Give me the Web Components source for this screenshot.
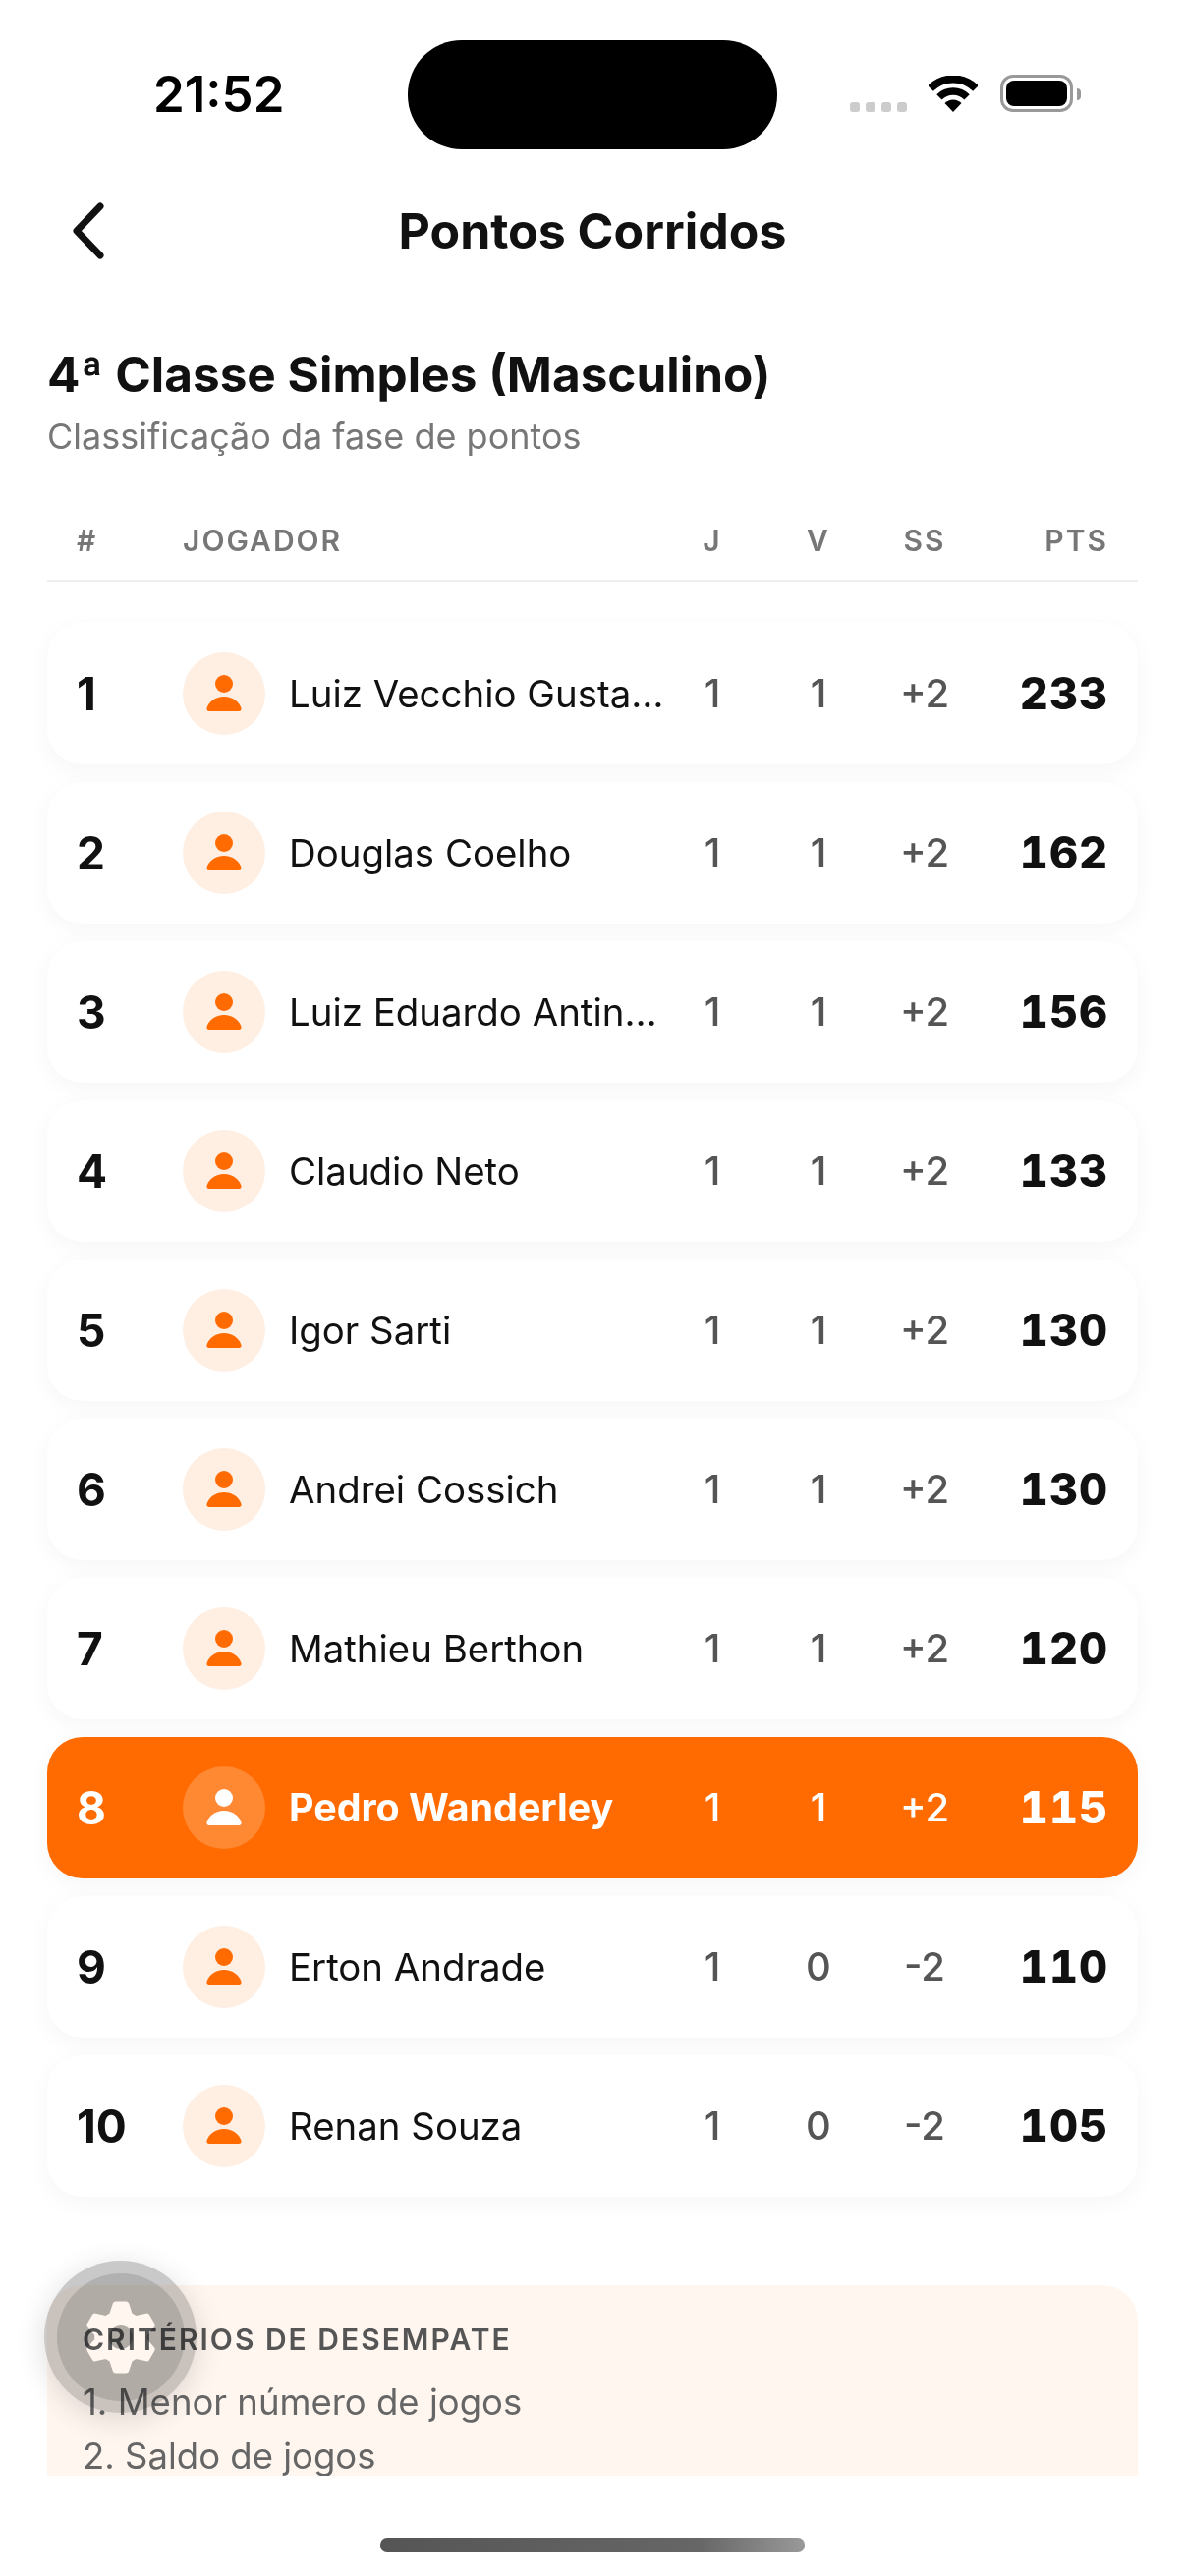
<!DOCTYPE html>
<html lang="pt-BR">
<head>
<meta charset="utf-8">
<title>Pontos Corridos</title>
<style>
  html, body { margin: 0; padding: 0; background: #fff; }
  body { width: 1206px; height: 2622px; overflow: hidden; font-family: Inter, "Liberation Sans", sans-serif; color: #111; }
</style>
</head>
<body>
<app-screen>
  <status-bar slot="top" time="21:52"></status-bar>
  <nav-bar slot="top" title="Pontos Corridos"></nav-bar>
  <page-heading title="4ª Classe Simples (Masculino)" subtitle="Classificação da fase de pontos"></page-heading>
  <table-head></table-head>
  <rank-list>
    <rank-row rank="1" name="Luiz Vecchio Gusta…" j="1" v="1" ss="+2" pts="233"></rank-row>
    <rank-row rank="2" name="Douglas Coelho" j="1" v="1" ss="+2" pts="162"></rank-row>
    <rank-row rank="3" name="Luiz Eduardo Antin…" j="1" v="1" ss="+2" pts="156"></rank-row>
    <rank-row rank="4" name="Claudio Neto" j="1" v="1" ss="+2" pts="133"></rank-row>
    <rank-row rank="5" name="Igor Sarti" j="1" v="1" ss="+2" pts="130"></rank-row>
    <rank-row rank="6" name="Andrei Cossich" j="1" v="1" ss="+2" pts="130"></rank-row>
    <rank-row rank="7" name="Mathieu Berthon" j="1" v="1" ss="+2" pts="120"></rank-row>
    <rank-row rank="8" name="Pedro Wanderley" j="1" v="1" ss="+2" pts="115" me></rank-row>
    <rank-row rank="9" name="Erton Andrade" j="1" v="0" ss="-2" pts="110"></rank-row>
    <rank-row rank="10" name="Renan Souza" j="1" v="0" ss="-2" pts="105"></rank-row>
  </rank-list>
  <criteria-box title="Critérios de desempate">
    <div>1. Menor número de jogos</div>
    <div>2. Saldo de jogos</div>
  </criteria-box>
  <gear-fab slot="over"></gear-fab>
  <home-bar slot="bottom"></home-bar>
</app-screen>

<script>
const COLUMNS = 'grid-template-columns: 108px minmax(0, 1fr) 108px 108px 108px 133px;';

class AppScreen extends HTMLElement {
  constructor() {
    super();
    this.attachShadow({ mode: 'open' });
    this.shadowRoot.innerHTML = `
      <style>
        :host { display: flex; flex-direction: column; position: relative; width: 1206px; height: 2622px; background: #fff; }
        #scroll { height: 2225px; overflow: hidden; padding: 0 48px; box-sizing: border-box; }
        #bottom { flex: 1; display: flex; justify-content: center; }
      </style>
      <slot name="top"></slot>
      <div id="scroll"><slot></slot></div>
      <div id="bottom"><slot name="bottom"></slot></div>
      <slot name="over"></slot>
    `;
  }
}

class StatusBar extends HTMLElement {
  constructor() {
    super();
    this.attachShadow({ mode: 'open' });
    this.shadowRoot.innerHTML = `
      <style>
        :host { display: block; position: relative; height: 175px; }
        #time { position: absolute; left: 156px; top: 66px; font: 600 51px/60px Inter, sans-serif; color: #000; }
        #island { position: absolute; left: 415px; top: 41px; width: 376px; height: 111px; border-radius: 55px; background: #000; }
        #dots { position: absolute; left: 865px; top: 104px; display: flex; gap: 6px; }
        #dots i { width: 10px; height: 10px; border-radius: 3px; background: #ccc; }
        #wifi { position: absolute; left: 945px; top: 77px; }
        #batt { position: absolute; left: 1018px; top: 76px; width: 74px; height: 38px; box-sizing: border-box; border: 3px solid #999; border-radius: 13px; padding: 3px; }
        #batt i { display: block; height: 100%; background: #000; border-radius: 8px; }
        #nub { position: absolute; left: 1096px; top: 90px; width: 4px; height: 12px; background: #999; border-radius: 0 4px 4px 0; }
      </style>
      <div id="time"></div>
      <div id="island"></div>
      <div id="dots"><i></i><i></i><i></i><i></i></div>
      <svg id="wifi" width="50" height="37" viewBox="0 0 50 37">
        <path d="M2 13A32.5 32.5 0 0 1 48 13" fill="none" stroke="#000" stroke-width="8"/>
        <path d="M10.9 21.9A20 20 0 0 1 39.1 21.9" fill="none" stroke="#000" stroke-width="7.5"/>
        <path d="M25 37L16.5 28A12 12 0 0 1 33.5 28Z" fill="#000"/>
      </svg>
      <div id="batt"><i></i></div>
      <div id="nub"></div>
    `;
    this.shadowRoot.querySelector('#time').textContent = this.getAttribute('time');
  }
}

class NavBar extends HTMLElement {
  constructor() {
    super();
    this.attachShadow({ mode: 'open' });
    this.shadowRoot.innerHTML = `
      <style>
        :host { display: flex; align-items: center; justify-content: center; position: relative; height: 120px; }
        #title { font: 700 50px/60px Inter, sans-serif; color: #111; }
        svg { position: absolute; left: 72px; top: 31px; }
      </style>
      <svg width="36" height="58" viewBox="0 0 36 58"><path d="M30 4L6 29L30 54" fill="none" stroke="#111" stroke-width="7" stroke-linecap="round" stroke-linejoin="round"/></svg>
      <div id="title"></div>
    `;
    this.shadowRoot.querySelector('#title').textContent = this.getAttribute('title');
  }
}

class PageHeading extends HTMLElement {
  constructor() {
    super();
    this.attachShadow({ mode: 'open' });
    this.shadowRoot.innerHTML = `
      <style>
        :host { display: block; padding-top: 56px; }
        h1 { margin: 0; font: 700 49.500px/60px Inter, sans-serif; color: #111; }
        p { margin: 11px 0 0; font: 400 36px/44px Inter, sans-serif; color: #777; }
      </style>
      <h1></h1>
      <p></p>
    `;
    this.shadowRoot.querySelector('h1').textContent = this.getAttribute('title');
    this.shadowRoot.querySelector('p').textContent = this.getAttribute('subtitle');
  }
}

class TableHead extends HTMLElement {
  constructor() {
    super();
    this.attachShadow({ mode: 'open' });
    this.shadowRoot.innerHTML = `
      <style>
        :host { display: grid; ${COLUMNS} margin-top: 66px; padding: 0 30px 22px; border-bottom: 2px solid #eee; font: 600 30px/36px Inter, sans-serif; letter-spacing: 2px; color: #777; }
        .c { text-align: center; }
        .r { text-align: right; }
      </style>
      <div>#</div><div>JOGADOR</div><div class="c">J</div><div class="c">V</div><div class="c">SS</div><div class="r">PTS</div>
    `;
  }
}

class RankList extends HTMLElement {
  constructor() {
    super();
    this.attachShadow({ mode: 'open' });
    this.shadowRoot.innerHTML = `
      <style>:host { display: flex; flex-direction: column; gap: 18px; margin-top: 42px; }</style>
      <slot></slot>
    `;
  }
}

class RankRow extends HTMLElement {
  constructor() {
    super();
    this.attachShadow({ mode: 'open' });
    this.shadowRoot.innerHTML = `
      <style>
        :host { display: grid; ${COLUMNS} align-items: center; height: 144px; padding: 0 30px; border-radius: 36px; background: #fff; box-shadow: 0 6px 24px rgba(0,0,0,.04); color: #111; }
        :host([me]) { background: #ff6b00; color: #fff; }
        #rank { font: 700 46px/50px Inter, sans-serif; }
        #player { display: flex; align-items: center; gap: 24px; min-width: 0; }
        #avatar { flex: none; width: 84px; height: 84px; border-radius: 50%; background: #ffeee2; color: #ff6b00; }
        :host([me]) #avatar { background: rgba(255,255,255,.2); color: #fff; }
        svg { display: block; fill: currentColor; }
        #name { font: 400 38.400px/48px Inter, sans-serif; white-space: nowrap; }
        :host([me]) #name { font-weight: 700; font-size: 39.400px; }
        .c { font: 500 40px/48px Inter, sans-serif; text-align: center; color: #555; }
        :host([me]) .c { color: #fff; }
        #pts { font: 800 45px/52px Inter, sans-serif; font-variant-numeric: tabular-nums; text-align: right; letter-spacing: 1px; }
      </style>
      <div id="rank"></div>
      <div id="player">
        <div id="avatar"><svg width="84" height="84" viewBox="0 0 84 84"><circle cx="42" cy="32" r="9"/><path d="M27 60H57C59 60 60 58.500 59.500 57C57.500 50 50.500 45 42 45S26.500 50 24.500 57C24 58.500 25 60 27 60Z"/></svg></div>
        <div id="name"></div>
      </div>
      <div class="c" id="j"></div>
      <div class="c" id="v"></div>
      <div class="c" id="ss"></div>
      <div id="pts"></div>
    `;
    for (const k of ['rank', 'name', 'j', 'v', 'ss', 'pts']) {
      this.shadowRoot.querySelector('#' + k).textContent = this.getAttribute(k);
    }
  }
}

class CriteriaBox extends HTMLElement {
  constructor() {
    super();
    this.attachShadow({ mode: 'open' });
    this.shadowRoot.innerHTML = `
      <style>
        :host { display: block; margin-top: 90px; padding: 37px 36px; border-radius: 36px; background: #fff6f0; }
        #t { font: 600 30px/36px Inter, sans-serif; letter-spacing: 2px; color: #555; text-transform: uppercase; }
        #l { margin-top: 19px; font: 400 36.500px/55px Inter, sans-serif; color: #666; }
      </style>
      <div id="t"></div>
      <div id="l"><slot></slot></div>
    `;
    this.shadowRoot.querySelector('#t').textContent = this.getAttribute('title');
  }
}

class GearFab extends HTMLElement {
  constructor() {
    super();
    this.attachShadow({ mode: 'open' });
    this.shadowRoot.innerHTML = `
      <style>
        :host { display: flex; align-items: center; justify-content: center; position: absolute; left: 45px; top: 2301px; width: 155px; height: 155px; border-radius: 50%; background: #c9c9c9; box-shadow: 0 6px 30px rgba(0,0,0,.14); mix-blend-mode: multiply; }
        #in { display: flex; align-items: center; justify-content: center; width: 130px; height: 130px; border-radius: 50%; background: #b1b1b1; }
      </style>
      <div id="in"><svg width="90" height="90" viewBox="-45 -45 90 90"><path fill="#fff" stroke="#fff" stroke-width="6" stroke-linejoin="round" fill-rule="evenodd" d="${GearFab.gearPath()}"/></svg></div>
    `;
  }

  static gearPath() {
    const pt = (r, a) => (r * Math.cos(a * Math.PI / 180)).toFixed(1) + ' ' + (r * Math.sin(a * Math.PI / 180)).toFixed(1);
    let d = '';
    for (let i = 0; i < 6; i++) {
      const a = -90 + i * 60;
      d += (i ? 'L' : 'M') + pt(24, a - 22) + 'L' + pt(34, a - 9) + 'L' + pt(34, a + 9) + 'L' + pt(24, a + 22);
    }
    return d + 'ZM15 0A15 15 0 1 0 -15 0A15 15 0 1 0 15 0Z';
  }
}

class HomeBar extends HTMLElement {
  constructor() {
    super();
    this.attachShadow({ mode: 'open' });
    this.shadowRoot.innerHTML = `
      <style>
        :host { display: block; width: 432px; height: 15px; margin-top: 63px; border-radius: 7px; background: linear-gradient(90deg, #555 0%, #666 75%, #999 100%); }
      </style>
    `;
  }
}

customElements.define('app-screen', AppScreen);
customElements.define('status-bar', StatusBar);
customElements.define('nav-bar', NavBar);
customElements.define('page-heading', PageHeading);
customElements.define('table-head', TableHead);
customElements.define('rank-list', RankList);
customElements.define('rank-row', RankRow);
customElements.define('criteria-box', CriteriaBox);
customElements.define('gear-fab', GearFab);
customElements.define('home-bar', HomeBar);
</script>
</body>
</html>
